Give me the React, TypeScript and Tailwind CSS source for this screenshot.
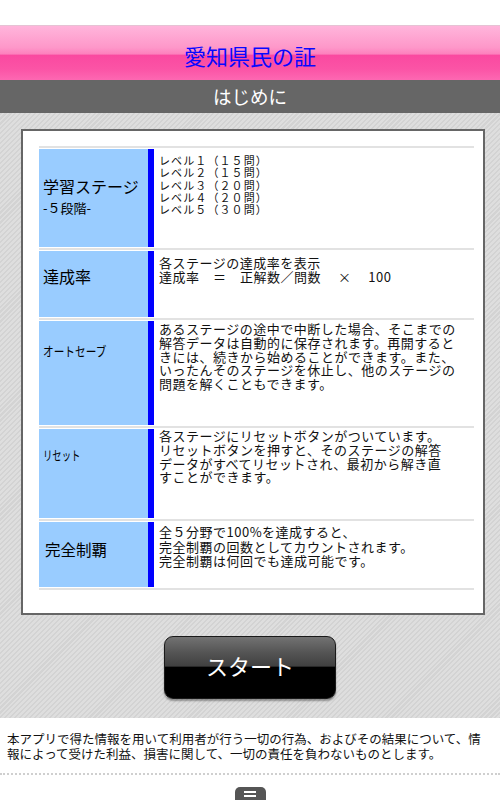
import React from "react";

const jp = "font-['Noto_Sans_CJK_JP','Noto_Sans',sans-serif]";

interface RowProps {
  h: number;
  label: React.ReactNode;
  labelClass: string;
  contentClass: string;
  lines: string[];
}

function Row({ h, label, labelClass, contentClass, lines }: RowProps) {
  return (
    <div className="border-t-2 border-[#e2e2e2] py-[1px]">
      <div className="flex" style={{ height: h }}>
        <div className={`w-[109px] shrink-0 bg-[#99ccff] pl-[4px] text-black ${labelClass}`}>{label}</div>
        <div className="w-[6px] shrink-0 bg-[#0000ff]" />
        <div className={`flex-1 pl-[5px] whitespace-nowrap text-[#111] ${contentClass}`}>
          {lines.map((l) => (
            <div key={l}>{l}</div>
          ))}
        </div>
      </div>
    </div>
  );
}

export default function App() {
  return (
    <div className={`w-[500px] h-[800px] overflow-hidden bg-white ${jp}`}>
      <div className="h-[25px] bg-white" />

      {/* title bar */}
      <div className="h-[55px] border-t border-[#e6c2d4] bg-[linear-gradient(to_bottom,#ffb5db_0%,#fe97c9_40%,#fd80bd_52%,#fa49a0_54%,#fb54a6_80%,#fd68b2_100%)] flex items-center justify-center pt-[4px]">
        <span className="text-[22px] leading-none text-[#0808ff]">愛知県民の証</span>
      </div>

      {/* sub header */}
      <div className="h-[33px] bg-[#666666] flex items-center justify-center">
        <span className="text-[18.5px] leading-none text-white">はじめに</span>
      </div>

      {/* striped body */}
      <div className="h-[605px] pt-[16px] px-[21px] bg-[repeating-linear-gradient(135deg,#d3d3d3_0px,#d3d3d3_1.5px,#dedede_1.5px,#dedede_3.5px)]">
        <div className="h-[486px] w-[464px] border-2 border-[#666666] bg-white pt-[15px] pl-[16px] pr-[9px]">
          <div className="border-b-2 border-[#e2e2e2]">
            <Row
              h={98}
              labelClass="flex flex-col justify-center pb-[2px]"
              label={
                <>
                  <div className="text-[16px] leading-[22px]">学習ステージ</div>
                  <div className="text-[13px] leading-[22px]">-５段階-</div>
                </>
              }
              contentClass="pt-[5px] text-[11px] leading-[12.25px] tracking-[1.1px]"
              lines={["レベル１（１５問）", "レベル２（１５問）", "レベル３（２０問）", "レベル４（２０問）", "レベル５（３０問）"]}
            />
            <Row
              h={66}
              labelClass="pt-[15px] text-[16px] leading-[20px]"
              label="達成率"
              contentClass="pt-[5px] text-[13px] tracking-[0.5px] leading-[14px]"
              lines={["各ステージの達成率を表示", "達成率　＝　正解数／問数　 ×　 100"]}
            />
            <Row
              h={104}
              labelClass="pt-[22px] text-[13px] leading-[16px]"
              label={<span className="inline-block origin-left scale-x-[0.82]">オートセーブ</span>}
              contentClass="pt-[1px] text-[13px] tracking-[0.5px] leading-[13.75px]"
              lines={[
                "あるステージの途中で中断した場合、そこまでの",
                "解答データは自動的に保存されます。再開すると",
                "きには、続きから始めることができます。また、",
                "いったんそのステージを休止し、他のステージの",
                "問題を解くこともできます。",
              ]}
            />
            <Row
              h={89}
              labelClass="pt-[18px] text-[13px] leading-[16px]"
              label={<span className="inline-block origin-left scale-x-[0.72]">リセット</span>}
              contentClass="pt-[0px] text-[13px] tracking-[0.5px] leading-[13.75px]"
              lines={[
                "各ステージにリセットボタンがついています。",
                "リセットボタンを押すと、そのステージの解答",
                "データがすべてリセットされ、最初から解き直",
                "すことができます。",
              ]}
            />
            <Row
              h={65}
              labelClass="pt-[17px] pl-[6px] text-[15.5px] leading-[20px]"
              label="完全制覇"
              contentClass="pt-[3px] text-[13px] tracking-[0.5px] leading-[14.5px]"
              lines={["全５分野で100%を達成すると、", "完全制覇の回数としてカウントされます。", "完全制覇は何回でも達成可能です。"]}
            />
          </div>
        </div>

        <div className="mt-[21px] mx-auto w-[172px] h-[63px] rounded-[9px] border border-[#1a1a1a] bg-[linear-gradient(to_bottom,#727272_0%,#555555_25%,#404040_48%,#000000_49%,#000000_100%)] shadow-[0_2px_2px_rgba(0,0,0,0.35)] flex items-center justify-center pb-[5px]">
          <span className="text-[22px] leading-none text-white">スタート</span>
        </div>
      </div>

      {/* disclaimer */}
      <div className="h-[55px] px-[7px] flex flex-col justify-center text-[12.5px] leading-[15px] text-[#111] whitespace-nowrap">
        <div>本アプリで得た情報を用いて利用者が行う一切の行為、およびその結果について、情</div>
        <div>報によって受けた利益、損害に関して、一切の責任を負わないものとします。</div>
      </div>

      <div className="h-[2px] border-t-2 border-dotted border-[#cfcfcf]" />

      {/* bottom nav */}
      <div className="h-[25px] flex justify-center pt-[12px]">
        <div className="w-[31px] h-[14px] rounded-t-[5px] bg-[#555555] flex flex-col items-center pt-[4px] gap-[2px]">
          <div className="w-[12px] h-[2px] bg-white" />
          <div className="w-[12px] h-[2px] bg-white" />
        </div>
      </div>
    </div>
  );
}
